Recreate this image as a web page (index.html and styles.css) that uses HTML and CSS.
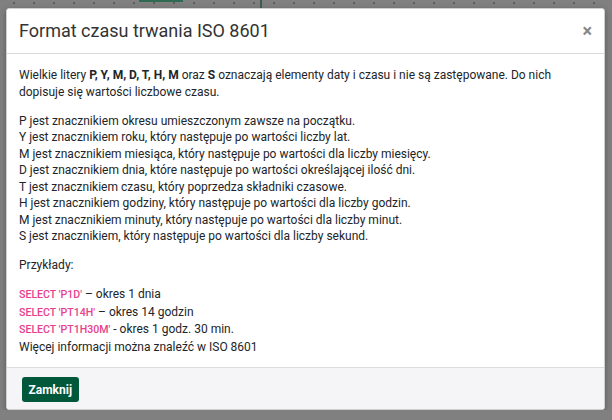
FILE: index.html
```html
<!DOCTYPE html>
<html lang="pl">
<head>
    <meta charset="UTF-8">
    <meta name="viewport" content="width=device-width, initial-scale=1.0">
    <title>Format czasu trwania ISO 8601</title>
    <link rel="stylesheet" href="styles.css">
</head>
<body>
    <div class="page-strip">
        <span class="tab-mark"></span>
        <span class="col-line"></span>
    </div>
    <div class="modal">
        <div class="modal-header">
            <h5 class="modal-title">Format czasu trwania ISO 8601</h5>
            <button type="button" class="close">&times;</button>
        </div>
        <div class="modal-body">
            <p>Wielkie litery <b>P, Y, M, D, T, H, M</b> oraz <b>S</b> oznaczają elementy daty i czasu i nie są zastępowane. Do nich dopisuje się wartości liczbowe czasu.</p>
            <p>
                P jest znacznikiem okresu umieszczonym zawsze na początku.<br>
                Y jest znacznikiem roku, który następuje po wartości liczby lat.<br>
                M jest znacznikiem miesiąca, który następuje po wartości dla liczby miesięcy.<br>
                D jest znacznikiem dnia, które następuje po wartości określającej ilość dni.<br>
                T jest znacznikiem czasu, który poprzedza składniki czasowe.<br>
                H jest znacznikiem godziny, który następuje po wartości dla liczby godzin.<br>
                M jest znacznikiem minuty, który następuje po wartości dla liczby minut.<br>
                S jest znacznikiem, który następuje po wartości dla liczby sekund.
            </p>
            <p>Przykłady:</p>
            <p>
                <code>SELECT 'P1D'</code> – okres 1 dnia<br>
                <code>SELECT 'PT14H'</code> – okres 14 godzin<br>
                <code>SELECT 'PT1H30M'</code> - okres 1 godz. 30 min.<br>
                Więcej informacji można znaleźć w ISO 8601
            </p>
        </div>
        <div class="modal-footer">
            <button type="button" class="btn">Zamknij</button>
        </div>
    </div>
</body>
</html>
```

FILE: styles.css
```css
body {
    font-family: Roboto, "Liberation Sans", sans-serif;
    margin: 0;
    padding: 0;
    background-color: #808080;
    color: #212529;
}
/* dimmed page behind the dialog */
.page-strip {
    height: 8px;
    display: flex;
    align-items: flex-start;
    background-image: radial-gradient(circle, #5c5c5c 0.8px, transparent 1.2px);
    background-size: 20px 8px;
    background-position: 4px -1px;
}
.tab-mark {
    width: 44px;
    height: 2px;
    margin-left: 139px;
    background-color: #2f6b52;
}
.col-line {
    width: 2px;
    height: 8px;
    margin-left: 77px;
    background-color: #3d5a50;
}
.modal {
    margin: 0 7px 0 6px;
    background: #fff;
    border: 1px solid #cfcfcf;
    border-radius: 3px;
    box-shadow: 0 2px 6px rgba(0, 0, 0, 0.3);
    overflow: hidden;
}
.modal-header {
    display: flex;
    align-items: center;
    justify-content: space-between;
    padding: 8px 12px;
    border-bottom: 1px solid #dcdce0;
}
.modal-title {
    margin: 0;
    font-size: 18px;
    font-weight: 400;
    line-height: 28px;
    color: #333;
}
.close {
    background: none;
    border: none;
    padding: 0;
    font-family: Roboto, "Liberation Sans", sans-serif;
    font-size: 18px;
    font-weight: 700;
    line-height: 1;
    color: #888;
    cursor: pointer;
}
.modal-body {
    padding: 13px 12px 12px;
    font-size: 12px;
    line-height: 16.5px;
}
.modal-body p {
    margin: 0 0 12.5px;
}
.modal-body p:last-child {
    margin-bottom: 0;
}
.modal-body b {
    font-weight: 700;
}
code {
    font-family: Roboto, "Liberation Sans", sans-serif;
    font-size: 10.6px;
    font-weight: 500;
    color: #e83e8c;
}
.modal-footer {
    padding: 9px 15px 7px;
    background-color: #f5f5f7;
    border-top: 1px solid #dcdce0;
}
.btn {
    padding: 0 6.5px;
    height: 25px;
    font-family: Roboto, "Liberation Sans", sans-serif;
    font-size: 12px;
    font-weight: 700;
    color: #fff;
    background-color: #00573a;
    border: none;
    border-radius: 3px;
    cursor: pointer;
}
```
